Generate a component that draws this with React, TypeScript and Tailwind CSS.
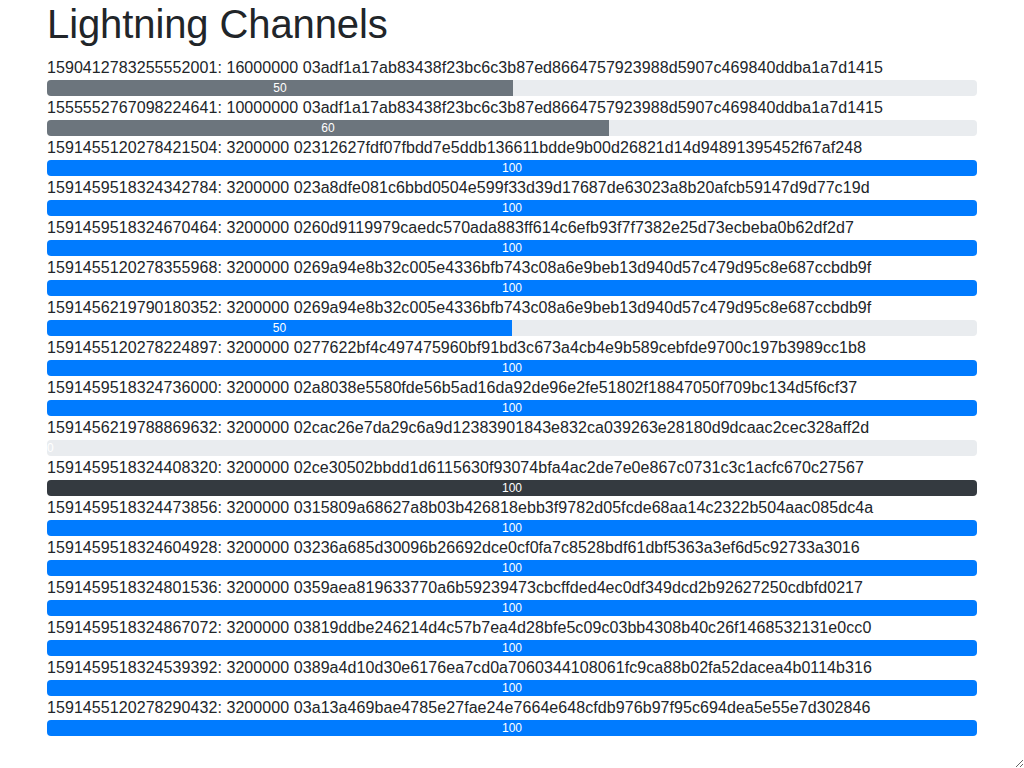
import React from "react"

type Channel = {
  id: string
  capacity: number
  node: string
  pct: number
  label: string
  color: "secondary" | "primary" | "dark"
}

const channels: Channel[] = [
  { id: "1590412783255552001", capacity: 16000000, node: "03adf1a17ab83438f23bc6c3b87ed8664757923988d5907c469840ddba1a7d1415", pct: 50.1, label: "50", color: "secondary" },
  { id: "1555552767098224641", capacity: 10000000, node: "03adf1a17ab83438f23bc6c3b87ed8664757923988d5907c469840ddba1a7d1415", pct: 60.43, label: "60", color: "secondary" },
  { id: "1591455120278421504", capacity: 3200000, node: "02312627fdf07fbdd7e5ddb136611bdde9b00d26821d14d94891395452f67af248", pct: 100, label: "100", color: "primary" },
  { id: "1591459518324342784", capacity: 3200000, node: "023a8dfe081c6bbd0504e599f33d39d17687de63023a8b20afcb59147d9d77c19d", pct: 100, label: "100", color: "primary" },
  { id: "1591459518324670464", capacity: 3200000, node: "0260d9119979caedc570ada883ff614c6efb93f7f7382e25d73ecbeba0b62df2d7", pct: 100, label: "100", color: "primary" },
  { id: "1591455120278355968", capacity: 3200000, node: "0269a94e8b32c005e4336bfb743c08a6e9beb13d940d57c479d95c8e687ccbdb9f", pct: 100, label: "100", color: "primary" },
  { id: "1591456219790180352", capacity: 3200000, node: "0269a94e8b32c005e4336bfb743c08a6e9beb13d940d57c479d95c8e687ccbdb9f", pct: 50, label: "50", color: "primary" },
  { id: "1591455120278224897", capacity: 3200000, node: "0277622bf4c497475960bf91bd3c673a4cb4e9b589cebfde9700c197b3989cc1b8", pct: 100, label: "100", color: "primary" },
  { id: "1591459518324736000", capacity: 3200000, node: "02a8038e5580fde56b5ad16da92de96e2fe51802f18847050f709bc134d5f6cf37", pct: 100, label: "100", color: "primary" },
  { id: "1591456219788869632", capacity: 3200000, node: "02cac26e7da29c6a9d12383901843e832ca039263e28180d9dcaac2cec328aff2d", pct: 0, label: "0", color: "primary" },
  { id: "1591459518324408320", capacity: 3200000, node: "02ce30502bbdd1d6115630f93074bfa4ac2de7e0e867c0731c3c1acfc670c27567", pct: 100, label: "100", color: "dark" },
  { id: "1591459518324473856", capacity: 3200000, node: "0315809a68627a8b03b426818ebb3f9782d05fcde68aa14c2322b504aac085dc4a", pct: 100, label: "100", color: "primary" },
  { id: "1591459518324604928", capacity: 3200000, node: "03236a685d30096b26692dce0cf0fa7c8528bdf61dbf5363a3ef6d5c92733a3016", pct: 100, label: "100", color: "primary" },
  { id: "1591459518324801536", capacity: 3200000, node: "0359aea819633770a6b59239473cbcffded4ec0df349dcd2b92627250cdbfd0217", pct: 100, label: "100", color: "primary" },
  { id: "1591459518324867072", capacity: 3200000, node: "03819ddbe246214d4c57b7ea4d28bfe5c09c03bb4308b40c26f1468532131e0cc0", pct: 100, label: "100", color: "primary" },
  { id: "1591459518324539392", capacity: 3200000, node: "0389a4d10d30e6176ea7cd0a7060344108061fc9ca88b02fa52dacea4b0114b316", pct: 100, label: "100", color: "primary" },
  { id: "1591455120278290432", capacity: 3200000, node: "03a13a469bae4785e27fae24e7664e648cfdb976b97f95c694dea5e55e7d302846", pct: 100, label: "100", color: "primary" },
]

const barColor = {
  secondary: "bg-[#6c757d]",
  primary: "bg-[#007bff]",
  dark: "bg-[#343a40]",
}

const App = () => {
  return (
    <div className="h-screen overflow-auto resize bg-white text-[#212529] font-['Liberation_Sans',Arial,sans-serif]">
      <div className="w-[960px] mx-auto px-[15px]">
        <h1 className="text-[40px] leading-[48px] font-medium mb-2 tracking-[-0.1px]">
          Lightning Channels
        </h1>
        {channels.map((c) => (
          <div key={c.id}>
            <div className="text-base leading-6 tracking-[0.07px]">
              {c.id}: {c.capacity} {c.node}
            </div>
            <div className="flex h-4 rounded bg-[#e9ecef] text-xs overflow-hidden">
              <div
                className={`${barColor[c.color]} flex flex-col justify-center text-center text-white whitespace-nowrap`}
                style={{ width: `${c.pct}%` }}
              >
                {c.label}
              </div>
            </div>
          </div>
        ))}
      </div>
    </div>
  )
}

export default App
